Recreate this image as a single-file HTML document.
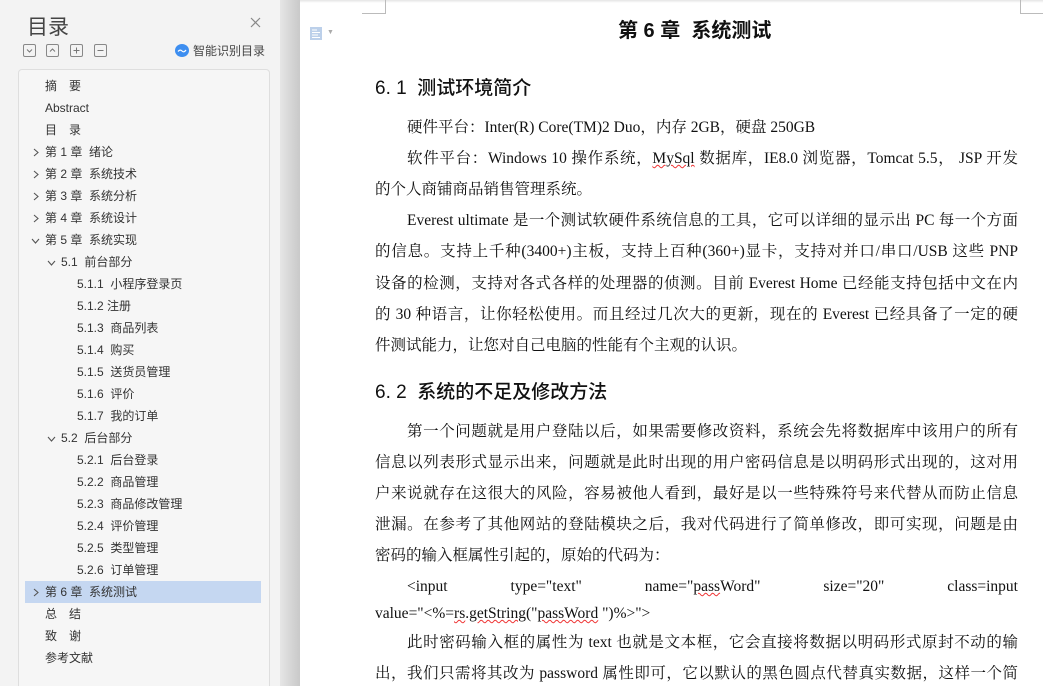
<!DOCTYPE html>
<html><head><meta charset="utf-8"><style>
*{margin:0;padding:0;box-sizing:border-box}
html,body{width:1043px;height:686px;overflow:hidden}
body{position:relative;background:#fff;font-family:"Liberation Sans","Noto Sans CJK SC",sans-serif}
#side{position:absolute;left:0;top:0;width:280px;height:686px;background:#f3f3f3;overflow:hidden}
#shadow{position:absolute;left:280px;top:0;width:20px;height:686px;background:linear-gradient(to right,#e6e6e6,#d4d4d4 60%,#c9c9c9)}
#panel{position:absolute;left:18px;top:69px;width:252px;height:640px;background:#f6f6f6;border:1px solid #dedede;border-radius:4px}
.t{position:absolute;font-size:12px;color:#333;white-space:pre;line-height:14px}
.ar{position:absolute;width:9px;height:9px}
.btn{position:absolute;top:44px;width:13px;height:13px}
#page{position:absolute;left:300px;top:0;width:743px;height:686px;background:#fff}
.l{position:absolute;left:375px;width:643px;font-family:"Liberation Serif","Noto Serif CJK SC",serif;font-size:15.5px;color:#111;white-space:nowrap;line-height:18px}
.j{text-align:justify;text-align-last:justify}
.h{position:absolute;font-family:"Liberation Sans","Noto Sans CJK SC",sans-serif;font-weight:500;color:#111;white-space:pre}
.sq{text-decoration:underline wavy #e33;text-decoration-thickness:1px}
</style></head><body>
<div id="side">
<div style="position:absolute;left:27px;top:11px;font-size:21px;color:#444">目录</div>
<svg style="position:absolute;left:250px;top:17px" width="11" height="11"><path d="M1 1L10 10M10 1L1 10" stroke="#888" stroke-width="1.2"/></svg>
<svg class="btn" style="left:23px" viewBox="0 0 13 13"><rect x=".5" y=".5" width="12" height="12" rx="1.5" fill="none" stroke="#888"/><path d="M4 5.5L6.5 8L9 5.5" fill="none" stroke="#777"/></svg>
<svg class="btn" style="left:46px" viewBox="0 0 13 13"><rect x=".5" y=".5" width="12" height="12" rx="1.5" fill="none" stroke="#888"/><path d="M4 7.5L6.5 5L9 7.5" fill="none" stroke="#777"/></svg>
<svg class="btn" style="left:70px" viewBox="0 0 13 13"><rect x=".5" y=".5" width="12" height="12" rx="1.5" fill="none" stroke="#888"/><path d="M3.5 6.5H9.5M6.5 3.5V9.5" stroke="#777"/></svg>
<svg class="btn" style="left:94px" viewBox="0 0 13 13"><rect x=".5" y=".5" width="12" height="12" rx="1.5" fill="none" stroke="#888"/><path d="M3.5 6.5H9.5" stroke="#777"/></svg>
<svg style="position:absolute;left:175px;top:44px" width="14" height="13"><ellipse cx="7" cy="6.5" rx="7" ry="6.5" fill="#3d8ef0"/><path d="M3 7.5Q5 5 7 7T11 6" stroke="#fff" fill="none" stroke-width="1.2"/></svg>
<div class="t" style="left:193px;top:44px;color:#444">智能识别目录</div>
<div id="panel"></div>
<div style="position:absolute;left:25px;top:581px;width:236px;height:22px;background:#c5d7f1"></div>
<svg width="0" height="0" style="position:absolute"><defs>
<path id="r" d="M3 1L7 4.5L3 8" fill="none" stroke="#555" stroke-width="1.1"/>
<path id="d" d="M1 3L4.5 7L8 3" fill="none" stroke="#555" stroke-width="1.1"/></defs></svg>
<div class="t" style="left:45px;top:79px">摘　要</div>
<div class="t" style="left:45px;top:101px">Abstract</div>
<div class="t" style="left:45px;top:123px">目　录</div>
<svg class="ar" style="left:31px;top:148px"><use href="#r"/></svg><div class="t" style="left:45px;top:145px">第 1 章  绪论</div>
<svg class="ar" style="left:31px;top:170px"><use href="#r"/></svg><div class="t" style="left:45px;top:167px">第 2 章  系统技术</div>
<svg class="ar" style="left:31px;top:192px"><use href="#r"/></svg><div class="t" style="left:45px;top:189px">第 3 章  系统分析</div>
<svg class="ar" style="left:31px;top:214px"><use href="#r"/></svg><div class="t" style="left:45px;top:211px">第 4 章  系统设计</div>
<svg class="ar" style="left:31px;top:236px"><use href="#d"/></svg><div class="t" style="left:45px;top:233px">第 5 章  系统实现</div>
<svg class="ar" style="left:47px;top:258px"><use href="#d"/></svg><div class="t" style="left:61px;top:255px">5.1  前台部分</div>
<div class="t" style="left:77px;top:277px">5.1.1  小程序登录页</div>
<div class="t" style="left:77px;top:299px">5.1.2 注册</div>
<div class="t" style="left:77px;top:321px">5.1.3  商品列表</div>
<div class="t" style="left:77px;top:343px">5.1.4  购买</div>
<div class="t" style="left:77px;top:365px">5.1.5  送货员管理</div>
<div class="t" style="left:77px;top:387px">5.1.6  评价</div>
<div class="t" style="left:77px;top:409px">5.1.7  我的订单</div>
<svg class="ar" style="left:47px;top:434px"><use href="#d"/></svg><div class="t" style="left:61px;top:431px">5.2  后台部分</div>
<div class="t" style="left:77px;top:453px">5.2.1  后台登录</div>
<div class="t" style="left:77px;top:475px">5.2.2  商品管理</div>
<div class="t" style="left:77px;top:497px">5.2.3  商品修改管理</div>
<div class="t" style="left:77px;top:519px">5.2.4  评价管理</div>
<div class="t" style="left:77px;top:541px">5.2.5  类型管理</div>
<div class="t" style="left:77px;top:563px">5.2.6  订单管理</div>
<svg class="ar" style="left:31px;top:588px"><use href="#r"/></svg><div class="t" style="left:45px;top:585px">第 6 章  系统测试</div>
<div class="t" style="left:45px;top:607px">总　结</div>
<div class="t" style="left:45px;top:629px">致　谢</div>
<div class="t" style="left:45px;top:651px">参考文献</div>
</div>
<div id="shadow"></div>
<div id="page">
<div style="position:absolute;left:0;top:0;width:743px;height:3px;background:linear-gradient(#e4e4e4,#fff)"></div>
<div style="position:absolute;left:62px;top:0;width:24px;height:14px;border-right:1px solid #bbb;border-bottom:1px solid #bbb"></div>
<div style="position:absolute;left:720px;top:0;width:24px;height:14px;border-left:1px solid #bbb;border-bottom:1px solid #bbb"></div>
<svg style="position:absolute;left:10px;top:27px" width="12" height="13"><rect width="12" height="13" fill="#bcd0ea"/><path d="M2 3H7M2 5.5H10M2 8H8M2 10.5H10" stroke="#fff"/></svg>
<div style="position:absolute;left:27px;top:29px;font-size:7px;color:#aaa">▼</div>
</div>
<div class="h" style="left:618px;top:14px;font-size:20px;font-weight:700">第 6 章  系统测试</div>
<div class="h" style="left:375px;top:73px;font-size:19px">6. 1  测试环境简介</div>
<div class="l" style="top:119px;padding-left:32px">硬件平台：Inter(R) Core(TM)2 Duo，内存 2GB，硬盘 250GB</div>
<div class="l j" style="top:150px;padding-left:32px">软件平台：Windows 10 操作系统，<span class="sq">MySql</span> 数据库，IE8.0 浏览器，Tomcat 5.5，  JSP 开发</div>
<div class="l" style="top:181px">的个人商铺商品销售管理系统。</div>
<div class="l j" style="top:212px;padding-left:32px">Everest ultimate 是一个测试软硬件系统信息的工具，它可以详细的显示出 PC 每一个方面</div>
<div class="l j" style="top:243px">的信息。支持上千种(3400+)主板，支持上百种(360+)显卡，支持对并口/串口/USB 这些 PNP</div>
<div class="l j" style="top:275px">设备的检测，支持对各式各样的处理器的侦测。目前 Everest Home 已经能支持包括中文在内</div>
<div class="l j" style="top:306px">的 30 种语言，让你轻松使用。而且经过几次大的更新，现在的 Everest 已经具备了一定的硬</div>
<div class="l" style="top:337px">件测试能力，让您对自己电脑的性能有个主观的认识。</div>
<div class="h" style="left:375px;top:377px;font-size:19px">6. 2  系统的不足及修改方法</div>
<div class="l j" style="top:423px;padding-left:32px">第一个问题就是用户登陆以后，如果需要修改资料，系统会先将数据库中该用户的所有</div>
<div class="l j" style="top:454px">信息以列表形式显示出来，问题就是此时出现的用户密码信息是以明码形式出现的，这对用</div>
<div class="l j" style="top:485px">户来说就存在这很大的风险，容易被他人看到，最好是以一些特殊符号来代替从而防止信息</div>
<div class="l j" style="top:516px">泄漏。在参考了其他网站的登陆模块之后，我对代码进行了简单修改，即可实现，问题是由</div>
<div class="l" style="top:547px">密码的输入框属性引起的，原始的代码为：</div>
<div class="l j" style="top:578px;padding-left:32px">&lt;input type="text" name="<span class="sq">pass</span>Word" size="20" class=input</div>
<div class="l" style="top:605px">value="&lt;%=<span class="sq">rs</span>.<span class="sq">getString</span>("<span class="sq">passWord</span> ")%&gt;"&gt;</div>
<div class="l j" style="top:634px;padding-left:32px">此时密码输入框的属性为 text 也就是文本框，它会直接将数据以明码形式原封不动的输</div>
<div class="l j" style="top:665px">出，我们只需将其改为 password 属性即可，它以默认的黑色圆点代替真实数据，这样一个简</div>
</body></html>
